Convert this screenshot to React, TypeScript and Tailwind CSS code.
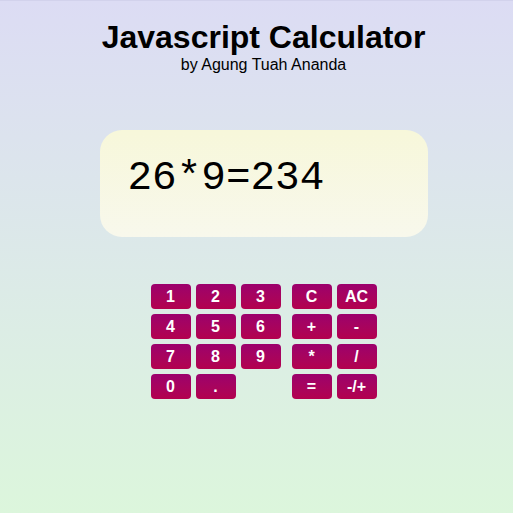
import { useState } from 'react';

const numKeys = ['1', '2', '3', '4', '5', '6', '7', '8', '9', '0', '.'];
const opKeys = ['C', 'AC', '+', '-', '*', '/', '=', '-/+'];

function Key({ label, onPress }: { label: string; onPress: (k: string) => void }) {
  return (
    <button
      onClick={() => onPress(label)}
      className="w-10 h-[25px] rounded-[4px] bg-gradient-to-b from-[#9c006c] to-[#b3004e] text-white font-bold text-[16px] leading-none flex items-center justify-center"
    >
      {label}
    </button>
  );
}

export default function App() {
  const [display, setDisplay] = useState('26*9=234');

  const press = (k: string) => {
    if (k === 'AC') return setDisplay('');
    if (k === 'C') return setDisplay(d => d.slice(0, -1));
    if (k === '=') {
      try {
        const expr = display.split('=')[0];
        // eslint-disable-next-line no-new-func
        const res = Function(`return (${expr})`)();
        setDisplay(`${expr}=${res}`);
      } catch {
        setDisplay('Error');
      }
      return;
    }
    if (k === '-/+') return setDisplay(d => (d.startsWith('-') ? d.slice(1) : '-' + d));
    setDisplay(d => (d.includes('=') ? k : d + k));
  };

  return (
    <div
      className="min-h-screen w-full border-t border-[#d2d2ec] bg-gradient-to-b from-[#dcdcf4] to-[#dcf6dc] pl-[14px] flex flex-col items-center"
      style={{ fontFamily: '"Liberation Sans", Arial, sans-serif' }}
    >
      <h1 className="mt-[18px] text-[32px] font-bold leading-[37px] text-black">Javascript Calculator</h1>
      <p className="text-[16px] leading-[18px] text-black">by Agung Tuah Ananda</p>

      <div className="mt-[56px] w-[328px] h-[107px] rounded-[22px] bg-gradient-to-b from-[#f7f7da] to-[#f8f8ec] pl-[28px] pt-[25px]">
        <div className="text-[41px] leading-[46px] text-black" style={{ fontFamily: '"Liberation Mono", monospace' }}>
          {display}
        </div>
      </div>

      <div className="mt-[47px] flex gap-[11px]">
        <div className="grid grid-cols-3 gap-[5px]">
          {numKeys.map(k => (
            <Key key={k} label={k} onPress={press} />
          ))}
        </div>
        <div className="grid grid-cols-2 gap-[5px]">
          {opKeys.map(k => (
            <Key key={k} label={k} onPress={press} />
          ))}
        </div>
      </div>
    </div>
  );
}
